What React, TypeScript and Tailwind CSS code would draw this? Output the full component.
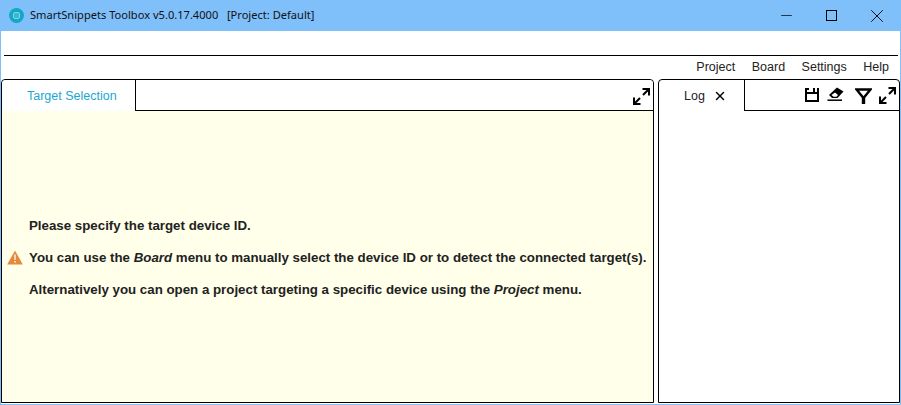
import { Minus, X } from "lucide-react";

function ExpandIcon() {
  return (
    <svg viewBox="0 0 17 17" className="w-[17px] h-[17px]" fill="none" stroke="black">
      <path d="M2 15L7 10M10 7L15 2" strokeWidth="2" />
      <path d="M1 9.5V16H7.5M9.5 1H16V7.5" strokeWidth="2" />
    </svg>
  );
}

function SaveIcon() {
  return (
    <svg viewBox="0 0 14 14" className="w-[14px] h-[14px]" fill="none" stroke="black" strokeWidth="2">
      <path d="M1 0V13H13V0" />
      <path d="M1 5H13" />
      <path d="M0 1H4M8 1H10" strokeWidth="2" />
      <path d="M9 0V4" />
    </svg>
  );
}

function EraserIcon() {
  return (
    <svg viewBox="0 0 17 15" className="w-[17px] h-[15px]">
      <path d="M10 0.5L16.5 4.5L10.5 11H5L2 8Z" fill="black" />
      <path d="M4.5 8L6.5 9.7H9.5L11 8L8 5.5Z" fill="white" />
      <path d="M0.5 13.2H15" stroke="black" strokeWidth="1.5" />
    </svg>
  );
}

function FilterIcon() {
  return (
    <svg viewBox="0 0 17 16" className="w-[17px] h-[16px]" fill="none" stroke="black" strokeWidth="2.4">
      <path d="M1.5 1.5H15.5L9 9.5V15H8V9.5Z" strokeLinejoin="miter" />
    </svg>
  );
}

function AppLogo() {
  return (
    <div className="w-[15px] h-[15px] rounded-full bg-[#12a8c6] flex items-center justify-center">
      <div className="w-[7px] h-[7px] rounded-[2px] border border-[#7fd3e3] bg-[#3bb6cf]" />
    </div>
  );
}

export default function App() {
  return (
    <div className="w-[901px] h-[405px] flex flex-col bg-white border-x border-b border-[#7fbffa] font-['Liberation_Sans',sans-serif] overflow-hidden">
      {/* Title bar */}
      <header className="h-[31px] -mx-px shrink-0 bg-[#7fbffa] flex items-center pl-[9px]">
        <AppLogo />
        <span className="ml-[6px] text-[11.1px] text-[#111] font-['Noto_Sans',sans-serif] whitespace-pre">
          SmartSnippets Toolbox v5.0.17.4000   [Project: Default]
        </span>
        <div className="ml-auto mr-[2px] flex items-center text-black">
          <div className="w-[45px] flex justify-center">
            <Minus className="w-[17px] h-[17px]" strokeWidth={1} absoluteStrokeWidth />
          </div>
          <div className="w-[45px] flex justify-center">
            <div className="w-[11px] h-[11px] border border-black" />
          </div>
          <div className="w-[45px] flex justify-center">
            <X className="w-[22px] h-[22px]" strokeWidth={1} absoluteStrokeWidth />
          </div>
        </div>
      </header>

      {/* Toolbar */}
      <div className="h-[25px] shrink-0 ml-[3px] mr-[2px] border-b border-black" />

      {/* Menu */}
      <nav className="h-[23px] shrink-0 flex items-center justify-end gap-[16.5px] pr-[11px] text-[12.5px] text-[#222]">
        <span>Project</span>
        <span>Board</span>
        <span>Settings</span>
        <span>Help</span>
      </nav>

      {/* Panels */}
      <main className="flex-1 min-h-0 flex gap-[4px] pb-px">
        <section className="w-[653px] flex flex-col border border-black rounded-t-[4px] bg-[#ffffea]">
          <div className="h-[31px] shrink-0 bg-white flex rounded-t-[4px]">
            <div className="w-[134px] border-r border-black flex items-center pl-[25px] pt-px text-[12.5px] text-[#1ba7d1]">
              Target Selection
            </div>
            <div className="flex-1 border-b border-black flex items-start justify-end pt-[8px] pr-[3px]">
              <ExpandIcon />
            </div>
          </div>
          <div className="flex-1 pt-[107px]">
            <div className="pl-[27px] flex flex-col gap-[16px] text-[13.3px] leading-[16px] font-bold text-[#222] whitespace-nowrap">
              <p>Please specify the target device ID.</p>
              <p className="relative">
                <svg viewBox="0 0 16 15" className="absolute -left-[22px] top-0 w-[16px] h-[15px]">
                  <path d="M8 0.5L15.8 14.5H0.2Z" fill="#e38a3c" />
                  <path d="M7.2 4.5H8.8L8.6 10H7.4ZM7.2 11H8.8V12.6H7.2Z" fill="#fff3e0" />
                </svg>
                You can use the <i>Board</i> menu to manually select the device ID or to detect the connected target(s).
              </p>
              <p>
                Alternatively you can open a project targeting a specific device using the <i>Project</i> menu.
              </p>
            </div>
          </div>
        </section>

        <section className="w-[242px] flex flex-col border border-black rounded-t-[4px] bg-white">
          <div className="h-[31px] shrink-0 flex">
            <div className="w-[86px] border-r border-black flex items-center pl-[25px] pt-px text-[12.5px] text-[#222]">
              Log
              <X className="w-[14px] h-[14px] ml-[8px] text-black" strokeWidth={2.4} />
            </div>
            <div className="flex-1 border-b border-black flex items-start pt-[8px]">
              <div className="ml-[60px]">
                <SaveIcon />
              </div>
              <div className="ml-[8px] -mt-px">
                <EraserIcon />
              </div>
              <div className="ml-[11px]">
                <FilterIcon />
              </div>
              <div className="ml-[7px] -mt-px">
                <ExpandIcon />
              </div>
            </div>
          </div>
        </section>
      </main>
    </div>
  );
}
